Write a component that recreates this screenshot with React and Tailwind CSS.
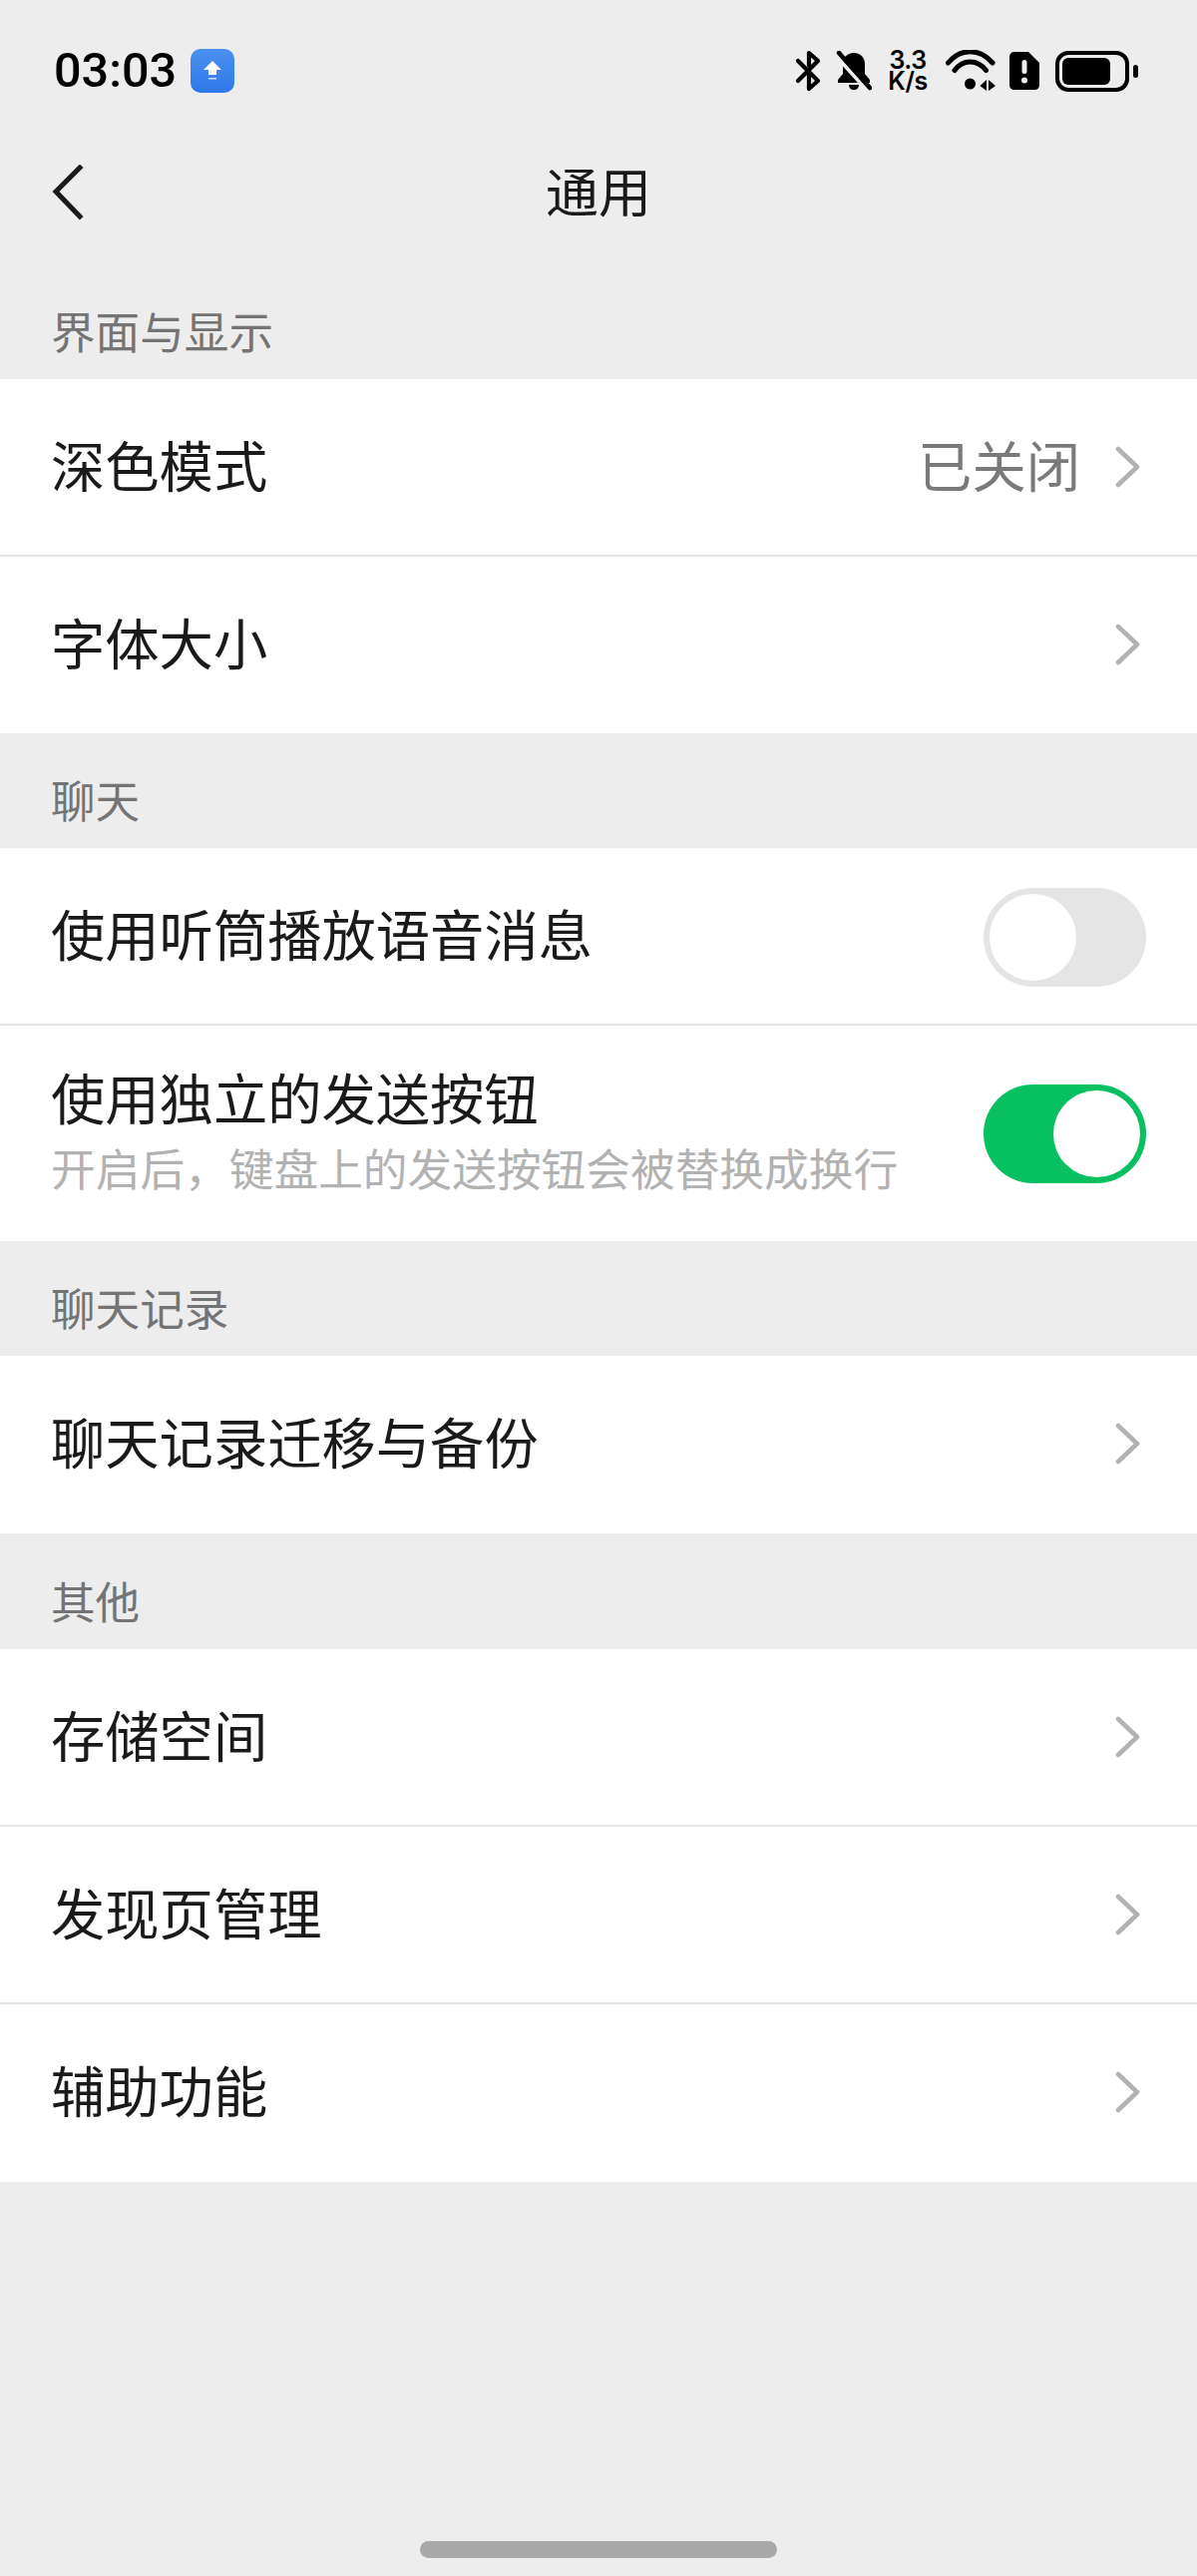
function Chevron() {
  return (
    <svg width="26" height="42" viewBox="0 0 26 42" fill="none" className="shrink-0 mr-[5px] mb-[2px]">
      <path d="M3 3 L22 21 L3 39" stroke="#b2b2b2" strokeWidth="4.5" strokeLinecap="round" strokeLinejoin="round" />
    </svg>
  );
}

function Toggle({ on }) {
  return (
    <div
      className={`flex items-center w-[163px] h-[99px] rounded-full p-[6px] shrink-0 ${
        on ? "bg-[#07c160] justify-end" : "bg-[#e5e5e5] justify-start"
      }`}
    >
      <div className="w-[87px] h-[87px] rounded-full bg-white" />
    </div>
  );
}

function SectionLabel({ children, height = "h-[115px]" }) {
  return (
    <div className={`flex items-end pb-[17px] pl-[51px] text-[44.6px] leading-[64px] text-[#747474] ${height}`}>
      {children}
    </div>
  );
}

function Row({ title, value, toggle, last, height = "h-[178px]" }) {
  return (
    <div className={`relative flex items-center justify-between bg-white pl-[51px] pr-[51px] ${height}`}>
      <span className="text-[54.3px] leading-[76px] text-[#1a1a1a] mb-[8px]">{title}</span>
      <div className="flex items-center">
        {value && <span className="text-[54.3px] leading-[76px] text-[#7a7a7a] mr-[35px] mb-[8px]">{value}</span>}
        {toggle === undefined ? <Chevron /> : <Toggle on={toggle} />}
      </div>
      {!last && <div className="absolute bottom-0 left-0 right-0 h-[2px] bg-[#e5e5e5]" />}
    </div>
  );
}

function StatusIcons() {
  return (
    <div className="flex items-center text-black">
      <svg width="26" height="42" viewBox="0 0 26 42" fill="none" stroke="#000" strokeWidth="4.2" strokeLinecap="round" strokeLinejoin="round">
        <path d="M3 11 L23 31 L14 39 L14 21" />
        <path d="M14 16 L14 3 L23 11 L3 31" />
      </svg>
      <svg width="36" height="40" viewBox="0 0 36 40" className="ml-[15px]">
        <path d="M18 2 C11 2 7 7 7 13 L7 23 L2 29 L2 32 L34 32 L34 29 L29 23 L29 13 C29 7 25 2 18 2 Z" fill="#000" />
        <path d="M13 34 C13 37 15 39 18 39 C21 39 23 37 23 34 Z" fill="#000" />
        <path d="M1 6 L30 38" stroke="#eeeeee" strokeWidth="4" />
        <path d="M3 2 L34 37" stroke="#000" strokeWidth="4.5" strokeLinecap="round" />
      </svg>
      <div className="ml-[15px] w-[42px] flex flex-col items-center font-['Inter',sans-serif] font-semibold text-[25px] leading-[21px] tracking-[-0.5px]">
        <span>3.3</span>
        <span>K/s</span>
      </div>
      <svg width="52" height="42" viewBox="0 0 52 42" fill="none" className="ml-[17px]">
        <path d="M2.5 13 C15 -2 34 -2 47 13" stroke="#000" strokeWidth="5" strokeLinecap="round" />
        <path d="M9 20.5 C17 9 32 9 40.5 20.5" stroke="#000" strokeWidth="5" strokeLinecap="round" />
        <circle cx="24.5" cy="34" r="5.5" fill="#000" />
        <path d="M41 30 L41 41 L34.5 36 Z M43 30 L43 41 L50 36 Z" fill="#000" />
      </svg>
      <svg width="30" height="38" viewBox="0 0 30 38" className="ml-[12px]">
        <path d="M5 0 L19 0 L30 11 L30 33 C30 36 28 38 25 38 L5 38 C2 38 0 36 0 33 L0 5 C0 2 2 0 5 0 Z" fill="#000" />
        <rect x="12.5" y="8" width="5" height="14" rx="2.5" fill="#eeeeee" />
        <circle cx="15" cy="28.5" r="3" fill="#eeeeee" />
      </svg>
      <div className="ml-[16px] flex items-center">
        <div className="w-[74px] h-[41px] rounded-[13px] border-[4px] border-black p-[3px] flex">
          <div className="w-[48px] h-full rounded-[6px] bg-black" />
        </div>
        <div className="ml-[4px] w-[5px] h-[13px] rounded-full bg-black" />
      </div>
    </div>
  );
}

export default function App() {
  return (
    <div className="w-[1200px] h-[2582px] bg-[#ededed] flex flex-col font-['Noto_Sans_CJK_SC','Noto_Sans',sans-serif] overflow-hidden">
      <div className="flex items-center justify-between h-[142px] pl-[54px] pr-[59px]">
        <div className="flex items-center">
          <span className="font-['Roboto',sans-serif] font-medium text-[48.5px] leading-[58px] text-black">03:03</span>
          <div className="ml-[14px] w-[44px] h-[44px] rounded-[10px] bg-gradient-to-b from-[#4a90f0] to-[#2f78ea] flex items-center justify-center">
            <svg width="20" height="22" viewBox="0 0 20 22">
              <path d="M10 1 L19 10 L14 10 L14 15 L6 15 L6 10 L1 10 Z" fill="#fff" />
              <rect x="6" y="18" width="8" height="1.5" fill="#cfe0fb" />
            </svg>
          </div>
        </div>
        <StatusIcons />
      </div>

      <div className="grid grid-cols-[1fr_auto_1fr] items-center h-[102px] px-[52px]">
        <svg width="32" height="56" viewBox="0 0 32 56" fill="none">
          <path d="M28 3 L4 27 L28 52" stroke="#1a1a1a" strokeWidth="5" strokeLinecap="square" />
        </svg>
        <span className="text-[53px] leading-[72px] text-[#1a1a1a] mb-[6px]">通用</span>
        <span />
      </div>

      <SectionLabel height="h-[136px]">界面与显示</SectionLabel>
      <Row title="深色模式" value="已关闭" />
      <Row title="字体大小" last height="h-[177px]" />

      <SectionLabel>聊天</SectionLabel>
      <Row title="使用听筒播放语音消息" toggle={false} />
      <div className="flex items-center justify-between bg-white pl-[51px] pr-[51px] h-[216px]">
        <div className="flex flex-col pb-[8px]">
          <span className="text-[54.3px] leading-[72px] text-[#1a1a1a] mb-[4px]">使用独立的发送按钮</span>
          <span className="text-[44.7px] leading-[62px] text-[#b2b2b2]">开启后，键盘上的发送按钮会被替换成换行</span>
        </div>
        <Toggle on />
      </div>

      <SectionLabel>聊天记录</SectionLabel>
      <Row title="聊天记录迁移与备份" last />

      <SectionLabel height="h-[116px]">其他</SectionLabel>
      <Row title="存储空间" />
      <Row title="发现页管理" />
      <Row title="辅助功能" last />

      <div className="flex-1 flex items-end justify-center pb-[18px]">
        <div className="w-[358px] h-[17px] rounded-full bg-[#a9a9a9]" />
      </div>
    </div>
  );
}
